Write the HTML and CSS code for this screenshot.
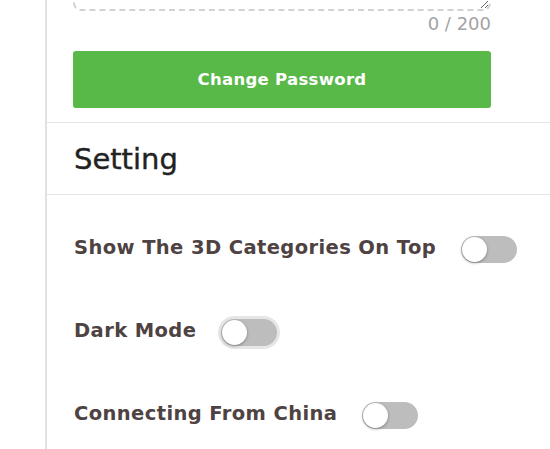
FILE: index.html
```html
<!DOCTYPE html>
<html>
<head>
<meta charset="utf-8">
<link rel="stylesheet" href="styles.css">
</head>
<body>
<div class="page">
  <div class="gutter"></div>
  <main class="panel">
    <section class="password">
      <textarea class="note" maxlength="200"></textarea>
      <div class="counter">0 / 200</div>
      <button class="btn-primary" type="button">Change Password</button>
    </section>
    <h2 class="section-title">Setting</h2>
    <section class="settings">
      <div class="setting-row">
        <span class="setting-label">Show The 3D Categories On Top</span>
        <span class="switch"><span class="knob"></span></span>
      </div>
      <div class="setting-row">
        <span class="setting-label">Dark Mode</span>
        <span class="switch focused"><span class="knob"></span></span>
      </div>
      <div class="setting-row">
        <span class="setting-label">Connecting From China</span>
        <span class="switch"><span class="knob"></span></span>
      </div>
    </section>
  </main>
</div>
</body>
</html>
```

FILE: styles.css
```css
html, body {
  margin: 0;
  padding: 0;
  background: #fff;
  font-family: "DejaVu Sans", "Liberation Sans", sans-serif;
}
.page {
  display: flex;
  height: 449px;
  overflow: hidden;
}
.gutter {
  width: 45px;
  flex: none;
}
.panel {
  flex: 1;
  border-left: 2px solid #e2e2e2;
  display: flex;
  flex-direction: column;
}
.password {
  padding: 0 59px 14px 26px;
  display: flex;
  flex-direction: column;
  border-bottom: 1px solid #e4e4e4;
}
.note {
  display: block;
  box-sizing: border-box;
  width: 100%;
  height: 50px;
  margin-top: -39px;
  border: 2px dashed #d2d2d2;
  border-radius: 8px;
  resize: vertical;
  outline: none;
}
.counter {
  text-align: right;
  font-size: 18px;
  font-weight: normal;
  color: #a3a3a3;
  line-height: 26px;
}
.btn-primary {
  margin-top: 14px;
  height: 57px;
  border: none;
  border-radius: 3px;
  background: #58b848;
  color: #fff;
  font-family: "DejaVu Sans", sans-serif;
  font-weight: bold;
  font-size: 16.5px;
  letter-spacing: 0.3px;
  cursor: pointer;
}
.section-title {
  margin: 0;
  height: 71px;
  display: flex;
  align-items: center;
  padding-left: 27px;
  font-size: 29px;
  font-weight: normal;
  color: #222;
  -webkit-text-stroke: 0.4px #222;
  border-bottom: 1px solid #e4e4e4;
}
.settings {
  padding: 40px 0 0 27px;
  display: flex;
  flex-direction: column;
  gap: 55px;
}
.setting-row {
  display: flex;
  align-items: center;
  gap: 25px;
  height: 28px;
}
.setting-label {
  font-size: 19.5px;
  font-weight: bold;
  letter-spacing: 0.4px;
  color: #4e4242;
  position: relative;
  top: -2px;
}
.switch {
  width: 56px;
  height: 27px;
  border-radius: 14px;
  background: #bdbdbd;
  display: flex;
  align-items: center;
  padding: 0 1px;
  box-sizing: border-box;
  flex: none;
}
.switch.focused {
  box-shadow: 0 0 0 3px #e6e6e6;
}
.knob {
  width: 25px;
  height: 25px;
  border-radius: 50%;
  background: #fff;
  box-shadow: 0 1px 3px rgba(0,0,0,0.35);
}
```
